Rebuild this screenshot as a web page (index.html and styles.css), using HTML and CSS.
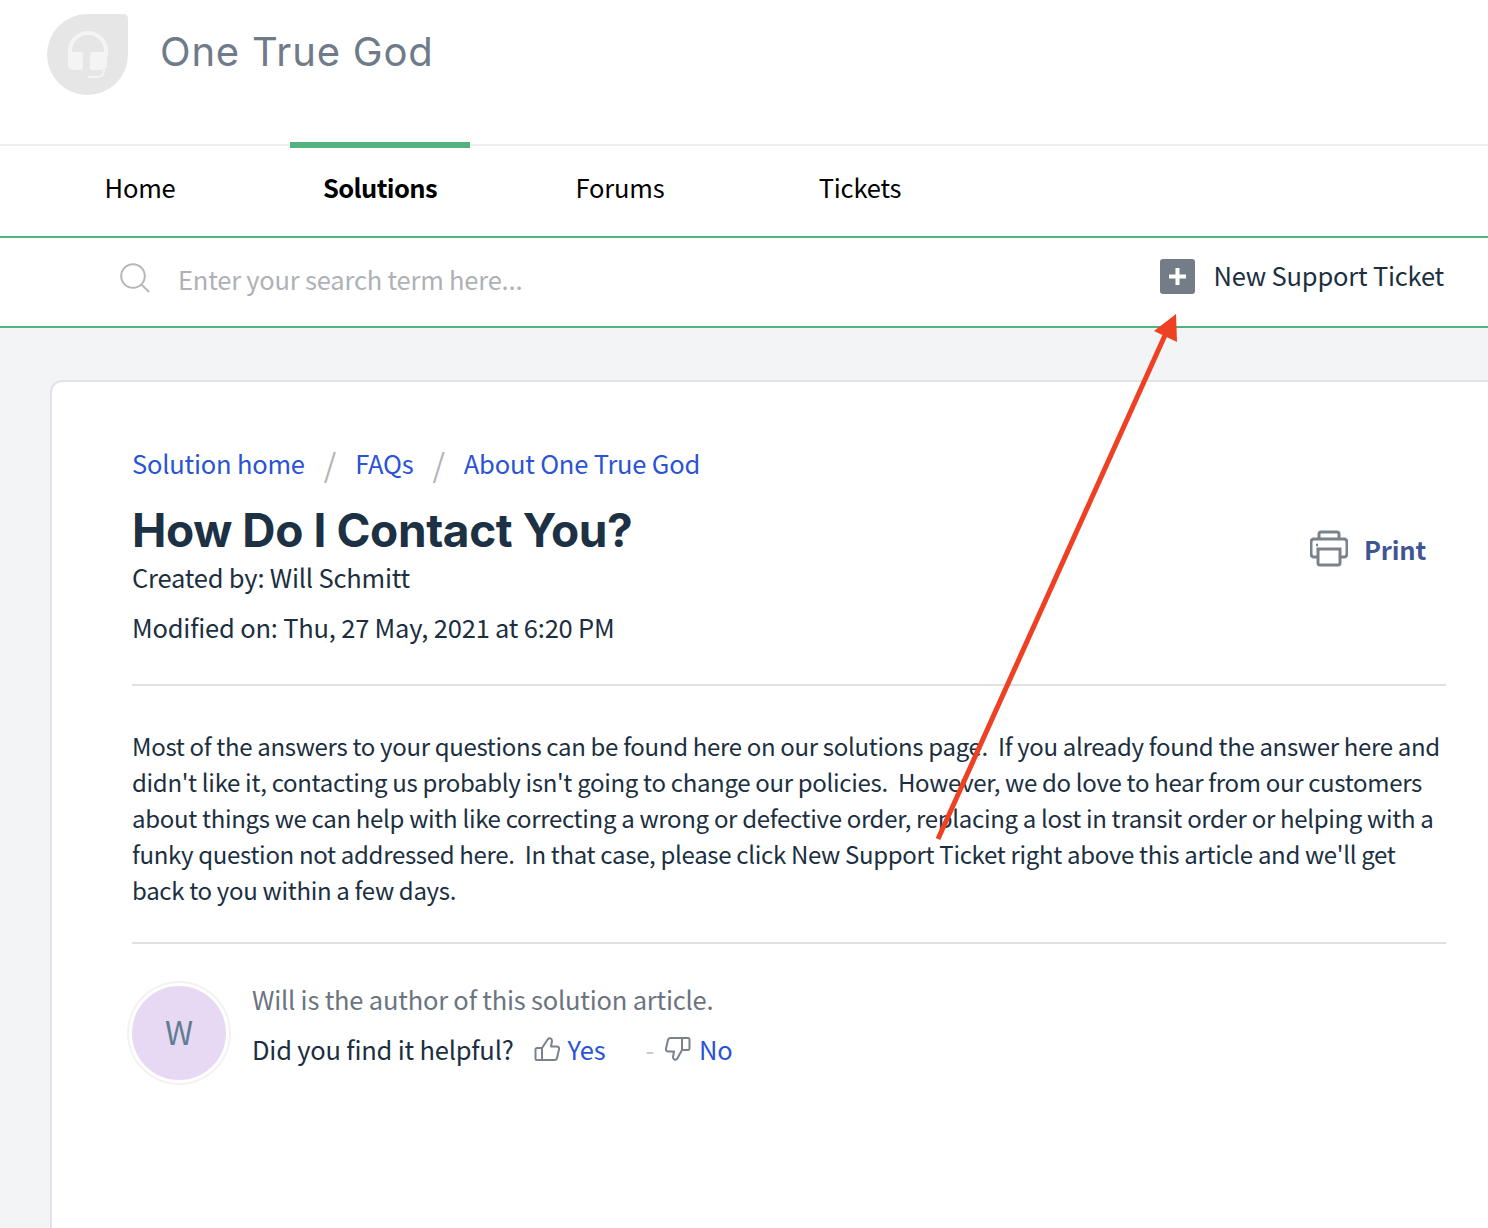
FILE: index.html
```html
<!DOCTYPE html>
<html lang="en">
<head>
<meta charset="utf-8">
<title>How Do I Contact You?</title>
<link rel="stylesheet" href="styles.css">
</head>
<body>
<header class="brand">
  <svg class="logo" width="84" height="84" viewBox="0 0 84 84">
    <path d="M41 1H77Q82 1 82 6V42A40.500 40.500 0 1 1 41 1Z" fill="#e6e6e6"/>
    <path d="M24 44V38A18 18 0 0 1 60 38V44" fill="none" stroke="#f4f4f4" stroke-width="4"/>
    <path d="M26 39h9a2 2 0 0 1 2 2v14a2 2 0 0 1-2 2h-8a5 5 0 0 1-5-5V43a4 4 0 0 1 4-4zM46 39h11a4 4 0 0 1 4 4v9a5 5 0 0 1-5 5H46a2 2 0 0 1-2-2V41a2 2 0 0 1 2-2z" fill="#f4f4f4"/>
    <path d="M58 57q0 7-8 7h-8" fill="none" stroke="#f4f4f4" stroke-width="2"/>
  </svg>
  <span class="brand-name">One True God</span>
</header>
<nav class="tabs">
  <a class="tab">Home</a>
  <a class="tab tab-active">Solutions</a>
  <a class="tab">Forums</a>
  <a class="tab">Tickets</a>
</nav>
<section class="searchbar">
  <div class="search">
    <svg class="search-icon" width="30" height="30" viewBox="0 0 30 30" fill="none" stroke="#b4b6b8" stroke-width="2"><circle cx="13" cy="13" r="11.800"/><path d="M21.500 21.500l7.500 7.500"/></svg>
    <span class="placeholder">Enter your search term here...</span>
  </div>
  <a class="new-ticket">
    <span class="plus-box"><svg width="19" height="19" viewBox="0 0 19 19"><path d="M9.500 1v17M1 9.500h17" stroke="#fff" stroke-width="4"/></svg></span>
    <span>New Support Ticket</span>
  </a>
</section>
<main class="page">
  <article class="card">
    <div class="breadcrumb">
      <a class="link">Solution home</a><span class="sep">/</span><a class="link">FAQs</a><span class="sep">/</span><a class="link">About One True God</a>
    </div>
    <div class="title-row">
      <div>
        <h1>How Do I Contact You?</h1>
        <p class="meta">Created by: Will Schmitt</p>
        <p class="meta meta-second">Modified on: Thu, 27 May, 2021 at 6:20 PM</p>
      </div>
      <a class="print">
        <svg width="38" height="37" viewBox="0 0 38 37" fill="none" stroke="#7a828c" stroke-width="3"><path d="M9 9V4a2 2 0 0 1 2-2h16a2 2 0 0 1 2 2v5"/><path d="M8 27H4a3 3 0 0 1-3-3V12a3 3 0 0 1 3-3h30a3 3 0 0 1 3 3v12a3 3 0 0 1-3 3h-4"/><path d="M8 19h22v14a2 2 0 0 1-2 2H10a2 2 0 0 1-2-2z"/><path d="M6 15h2" stroke-width="2.500"/></svg>
        <span>Print</span>
      </a>
    </div>
    <div class="article-body">Most of the answers to your questions can be found here on our solutions page.&nbsp; If you already found the answer here and didn't like it, contacting us probably isn't going to change our policies.&nbsp; However, we do love to hear from our customers about things we can help with like correcting a wrong or defective order, replacing a lost in transit order or helping with a funky question not addressed here.&nbsp; In that case, please click New Support Ticket right above this article and we'll get back to you within a few days.</div>
    <footer class="author">
      <div class="avatar">W</div>
      <div class="author-text">
        <p class="author-note">Will is the author of this solution article.</p>
        <div class="vote">
          <span class="vote-q">Did you find it helpful?</span>
          <svg class="thumb" width="26" height="26" viewBox="0 0 26 26" fill="none" stroke="#7a828c" stroke-width="2" stroke-linejoin="round"><path d="M8 12v12H3a1.500 1.500 0 0 1-1.500-1.500v-9A1.500 1.500 0 0 1 3 12z"/><path d="M8 12l6-9c1.500-1.500 4-.5 4 2l-1 5.500h5.500c2 0 3 1.500 2.500 3l-2 8.500c-.3 1.200-1.200 2-2.500 2H8"/></svg>
          <a class="link">Yes</a>
          <span class="dash">-</span>
          <svg class="thumb" width="26" height="26" viewBox="0 0 26 26" fill="none" stroke="#7a828c" stroke-width="2" stroke-linejoin="round"><path d="M17 14V2h6a1.500 1.500 0 0 1 1.500 1.500v9A1.500 1.500 0 0 1 23 14z"/><path d="M17 14l-5 9c-1.500 1.500-4 .5-4-2l1-5.500H3.500c-2 0-3-1.500-2.500-3l2-8.500C3.300 2.800 4.200 2 5.500 2H17"/></svg>
          <a class="link">No</a>
        </div>
      </div>
    </footer>
  </article>
</main>
<svg class="arrow" width="1488" height="1228" viewBox="0 0 1488 1228">
  <path d="M938 839L1166 333" stroke="#ee4023" stroke-width="5" fill="none"/>
  <path d="M1176 314L1177 342L1154 331Z" fill="#ee4023"/>
</svg>
</body>
</html>
```

FILE: styles.css
```css
* { box-sizing: border-box; }
html, body { margin: 0; padding: 0; }
body {
  position: relative;
  height: 1228px;
  overflow: hidden;
  background: #f3f4f6;
  color: #1b2f41;
  font-family: "Noto Sans CJK SC", "Noto Sans", sans-serif;
  font-size: 25.500px;
  letter-spacing: -.2px;
}
p, h1 { margin: 0; }

.brand {
  height: 144px;
  background: #fff;
  display: flex;
  align-items: flex-start;
  padding: 13px 0 0 46px;
}
.logo { flex: none; }
.brand-name {
  margin: 11px 0 0 30px;
  font-family: Inter, "Noto Sans", sans-serif;
  font-size: 40px;
  line-height: 56px;
  letter-spacing: .8px;
  color: #6f7b89;
}

.tabs {
  height: 94px;
  display: flex;
  gap: 60px;
  padding-left: 50px;
  background: #fff;
  border-top: 2px solid #eeeeee;
  border-bottom: 2px solid #53b27e;
}
.tab {
  width: 180px;
  margin-top: -4px;
  height: 92px;
  border-top: 6px solid transparent;
  text-align: center;
  line-height: 78px;
  color: #000;
}
.tab-active { border-top-color: #53b27e; font-weight: 700; letter-spacing: -.6px; }

.searchbar {
  height: 90px;
  display: flex;
  justify-content: space-between;
  padding: 0 44px 0 120px;
  background: #fff;
  border-bottom: 2px solid #53b27e;
}
.search { display: flex; align-items: center; gap: 28px; }
.search-icon { margin-bottom: 8px; }
.placeholder { color: #aeb1b5; line-height: 78px; margin-bottom: 6px; }
.new-ticket { display: flex; align-items: center; gap: 18px; height: 72px; }
.plus-box {
  width: 35px;
  height: 35px;
  margin-top: 4px;
  display: flex;
  align-items: center;
  justify-content: center;
  background: #737c87;
  border-radius: 3px;
}

.page { padding: 52px 0 0 50px; }
.card {
  width: 1500px;
  height: 900px;
  padding: 60px 0 0 80px;
  background: #fff;
  border: 2px solid #e0e3e7;
  border-radius: 12px;
}
.card > * { width: 1314px; }
.breadcrumb { display: flex; height: 44px; line-height: 42px; margin-bottom: 16px; }
.link { color: #2a53d6; }
.sep { color: #b5b5b5; margin: 0 19px; font-size: 32px; }

.title-row {
  display: flex;
  justify-content: space-between;
  align-items: flex-start;
  height: 184px;
  border-bottom: 2px solid #dfe1e3;
}
h1 {
  font-family: Inter, "Noto Sans", sans-serif;
  font-size: 46px;
  font-weight: 700;
  line-height: 56px;
  letter-spacing: -.4px;
  margin-bottom: -1px;
  color: #1c3144;
}
.meta { line-height: 40px; }
.meta-second { margin-top: 10px; }
.print {
  display: flex;
  align-items: center;
  gap: 16px;
  margin: 28px 20px 0 0;
  font-weight: 700;
  color: #3f5694;
}

.article-body {
  height: 258px;
  padding-top: 42px;
  font-size: 24px;
  letter-spacing: -.32px;
  line-height: 36px;
  border-bottom: 2px solid #dfe1e3;
}

.author { display: flex; gap: 23px; margin-top: 37px; }
.avatar {
  width: 100px;
  height: 100px;
  margin: 2px 0 0 -3px;
  padding-bottom: 4px;
  display: flex;
  align-items: center;
  justify-content: center;
  background: #e7d8f3;
  border: 3px solid #fff;
  box-shadow: 0 0 0 2px #f2f2f2;
  border-radius: 50%;
  color: #5f7d92;
  font-size: 32px;
}
.author-text { margin-top: -2px; }
.author-note { color: #6b7480; line-height: 40px; }
.vote { display: flex; align-items: center; margin-top: 10px; line-height: 40px; }
.thumb { margin: 0 8px 0 20px; }
.dash { color: #c8c8c8; margin-left: 40px; margin-right: -9px; }

.arrow { position: absolute; left: 0; top: 0; pointer-events: none; }
```
